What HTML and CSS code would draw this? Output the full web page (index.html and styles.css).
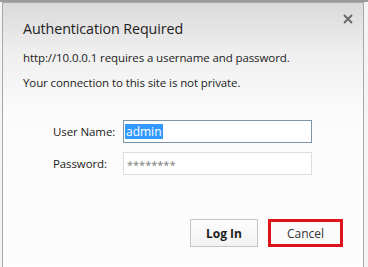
FILE: index.html
```html
<!DOCTYPE html>
<html>
<head>
<meta charset="utf-8">
<link rel="stylesheet" href="styles.css">
</head>
<body>
<div class="dialog">
  <div class="close" aria-label="Close">
    <svg width="10" height="10" viewBox="0 0 10 10"><path d="M1 1 L9 9 M9 1 L1 9" stroke="#6a6a6a" stroke-width="2" fill="none"/></svg>
  </div>
  <h1 class="title">Authentication Required</h1>
  <p class="msg">http://10.0.0.1 requires a username and password.</p>
  <p class="msg">Your connection to this site is not private.</p>
  <div class="form">
    <div class="row">
      <label class="label">User Name:</label>
      <div class="input focused"><span class="sel">admin</span></div>
    </div>
    <div class="row">
      <label class="label">Password:</label>
      <div class="input"><span class="dots">********</span></div>
    </div>
  </div>
  <div class="buttons">
    <button class="btn primary">Log In</button>
    <button class="btn cancel">Cancel</button>
  </div>
</div>
</body>
</html>
```
FILE: styles.css
```css
html, body {
  margin: 0;
  padding: 0;
  width: 368px;
  height: 267px;
  overflow: hidden;
  background: #f4f4f4;
  font-family: "Open Sans", "Noto Sans", sans-serif;
}
body {
  border-top: 2px solid #9a9a9a;
  box-sizing: border-box;
}
.dialog {
  position: relative;
  margin-left: 2px;
  width: 362px;
  height: 265px;
  box-sizing: border-box;
  border: 1px solid #a9a9a9;
  border-bottom: none;
  background: linear-gradient(#dadada 0px, #efefef 50px, #fbfbfb 110px, #fdfdfd 267px);
  padding: 0 0 0 20px;
  color: #222;
}
.close {
  position: absolute;
  right: 10px;
  top: 11px;
  width: 10px;
  height: 10px;
  line-height: 0;
}
.title {
  margin: 0;
  padding-top: 16px;
  font-size: 14.3px;
  font-weight: 400;
  line-height: 20px;
  color: #1e1e1e;
  letter-spacing: -0.1px;
}
.msg {
  margin: 0;
  font-size: 11.5px;
  line-height: 16px;
  color: #222;
  letter-spacing: -0.1px;
}
.title + .msg { margin-top: 11px; }
.msg + .msg { margin-top: 9px; }
.form {
  margin-top: 29px;
  padding-left: 30px;
  display: flex;
  flex-direction: column;
  gap: 9px;
}
.row {
  display: flex;
  align-items: center;
}
.label {
  width: 70px;
  font-size: 11.5px;
  color: #222;
  letter-spacing: -0.1px;
}
.input {
  width: 189px;
  height: 23px;
  box-sizing: border-box;
  border: 1px solid #dedede;
  background: #fff;
  display: flex;
  align-items: center;
  padding-left: 1px;
}
.input.focused {
  border-color: #7f93a6;
}
.sel {
  background: #3399ff;
  color: #fff;
  font-size: 12px;
  line-height: 15px;
  padding: 0 1px;
}
.dots {
  color: #777;
  font-size: 11px;
  padding-left: 2px;
  padding-top: 2px;
}
.buttons {
  margin-top: 44px;
  display: flex;
  justify-content: flex-end;
  gap: 10px;
  padding-right: 20px;
}
.btn {
  height: 28px;
  box-sizing: border-box;
  font-family: "Open Sans", "Noto Sans", sans-serif;
  font-size: 12px;
  color: #1e1e1e;
  background: linear-gradient(#fdfdfd, #f2f2f2);
  border: 1px solid #c6c6c6;
  padding: 0;
  margin: 0;
}
.primary {
  width: 68px;
  font-weight: 700;
}
.cancel {
  width: 75px;
  border: 3px solid #e0121b;
  background: #fbfbfb;
  color: #333;
}
```
